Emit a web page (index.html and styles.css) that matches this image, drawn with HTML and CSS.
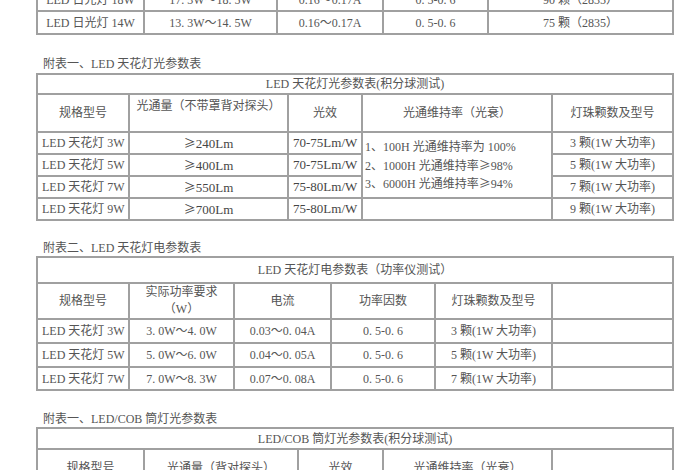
FILE: index.html
```html
<!DOCTYPE html>
<html lang="zh-CN">
<head>
<meta charset="utf-8">
<link rel="stylesheet" href="styles.css">
</head>
<body>
<div class="page">
  <table class="tbl t0">
    <colgroup><col style="width:107px"><col style="width:133px"><col style="width:106px"><col style="width:105px"><col style="width:185px"></colgroup>
    <tr class="r23"><td>LED 日光灯 18W</td><td>17. 3W～18. 5W</td><td>0.16～0.17A</td><td>0. 5-0. 6</td><td>90 颗（2835）</td></tr>
    <tr class="r23"><td>LED 日光灯 14W</td><td>13. 3W～14. 5W</td><td>0.16～0.17A</td><td>0. 5-0. 6</td><td>75 颗（2835）</td></tr>
  </table>

  <h2 class="cap cap1">附表一、LED 天花灯光参数表</h2>
  <table class="tbl t1">
    <colgroup><col style="width:92px"><col style="width:159px"><col style="width:74px"><col style="width:190px"><col style="width:121px"></colgroup>
    <tr class="r20"><td colspan="5" class="title">LED 天花灯光参数表(积分球测试)</td></tr>
    <tr class="r38"><td>规格型号</td><td class="top">光通量（不带罩背对探头）</td><td>光效</td><td>光通维持率（光衰）</td><td>灯珠颗数及型号</td></tr>
    <tr class="r22"><td>LED 天花灯 3W</td><td class="num"><span class="ge">≥</span>240Lm</td><td class="left num">70-75Lm/W</td>
      <td rowspan="3" class="left merged"><span class="ln">1、100H 光通维持率为 100%</span><span class="ln">2、1000H 光通维持率<span class="ge">≥</span>98%</span><span class="ln">3、6000H 光通维持率<span class="ge">≥</span>94%</span></td><td>3 颗(1W 大功率)</td></tr>
    <tr class="r22"><td>LED 天花灯 5W</td><td class="num"><span class="ge">≥</span>400Lm</td><td class="left num">70-75Lm/W</td><td>5 颗(1W 大功率)</td></tr>
    <tr class="r22"><td>LED 天花灯 7W</td><td class="num"><span class="ge">≥</span>550Lm</td><td class="left num">75-80Lm/W</td><td>7 颗(1W 大功率)</td></tr>
    <tr class="r22"><td>LED 天花灯 9W</td><td class="num"><span class="ge">≥</span>700Lm</td><td class="left num">75-80Lm/W</td><td></td><td>9 颗(1W 大功率)</td></tr>
  </table>

  <h2 class="cap cap2">附表二、LED 天花灯电参数表</h2>
  <table class="tbl t2">
    <colgroup><col style="width:92px"><col style="width:105px"><col style="width:97px"><col style="width:104px"><col style="width:117px"><col style="width:121px"></colgroup>
    <tr class="r26"><td colspan="6" class="title">LED 天花灯电参数表（功率仪测试）</td></tr>
    <tr class="r36"><td>规格型号</td><td class="two">实际功率要求<br>（W）</td><td>电流</td><td>功率因数</td><td>灯珠颗数及型号</td><td></td></tr>
    <tr class="r24"><td>LED 天花灯 3W</td><td>3. 0W～4. 0W</td><td>0.03～0. 04A</td><td>0. 5-0. 6</td><td>3 颗(1W 大功率)</td><td></td></tr>
    <tr class="r24"><td>LED 天花灯 5W</td><td>5. 0W～6. 0W</td><td>0.04～0. 05A</td><td>0. 5-0. 6</td><td>5 颗(1W 大功率)</td><td></td></tr>
    <tr class="r23"><td>LED 天花灯 7W</td><td>7. 0W～8. 3W</td><td>0.07～0. 08A</td><td>0. 5-0. 6</td><td>7 颗(1W 大功率)</td><td></td></tr>
  </table>

  <h2 class="cap cap3">附表一、LED/COB 筒灯光参数表</h2>
  <table class="tbl t3">
    <colgroup><col style="width:107px"><col style="width:154px"><col style="width:85px"><col style="width:169px"><col style="width:121px"></colgroup>
    <tr class="r21"><td colspan="5" class="title">LED/COB 筒灯光参数表(积分球测试)</td></tr>
    <tr class="r37"><td>规格型号</td><td>光通量（背对探头）</td><td>光效</td><td>光通维持率（光衰）</td><td></td></tr>
  </table>
</div>
</body>
</html>
```

FILE: styles.css
```css
html, body {
  margin: 0;
  padding: 0;
  background: #ffffff;
}
body {
  width: 700px;
  height: 470px;
  overflow: hidden;
  font-family: "Liberation Serif", "Noto Sans CJK SC", serif;
  color: #555555;
  font-size: 12px;
}
.page {
  padding: 0 0 0 36px;
}
.tbl {
  border-collapse: collapse;
  table-layout: fixed;
  width: 637px;
}
.tbl td {
  border: 2px solid #a0a0a0;
  text-align: center;
  vertical-align: middle;
  padding: 0 4px;
  line-height: 16px;
  white-space: nowrap;
  overflow: hidden;
}
.t0 {
  margin-top: -13px;
}
.r20 { height: 20px; }
.r21 { height: 21px; }
.r22 { height: 22px; }
.r23 { height: 23px; }
.r24 { height: 24px; }
.r26 { height: 26px; }
.r36 { height: 36px; }
.r37 { height: 37px; }
.r38 { height: 38px; }

.tbl td.title {
  text-align: center;
}
.tbl td.top {
  vertical-align: top;
  padding-top: 3px;
}
.tbl td.left {
  text-align: left;
}
.tbl td.num {
  font-size: 13px;
  color: #454545;
}
.ge {
  font-family: "Noto Sans CJK SC", sans-serif;
  font-size: 12px;
}
.tbl td.merged {
  padding-left: 2px;
}
.ln {
  display: block;
  height: 17.5px;
  line-height: 17.5px;
  overflow: visible;
}
.tbl td.two {
  line-height: 17px;
}
.cap {
  font-size: 12px;
  font-weight: normal;
  line-height: 16px;
  height: 16px;
  margin: 0 0 0 7px;
  color: #555555;
}
.cap1 { margin-top: 21px; margin-bottom: 1px; }
.cap2 { margin-top: 19px; }
.cap3 { margin-top: 20px; }
```
